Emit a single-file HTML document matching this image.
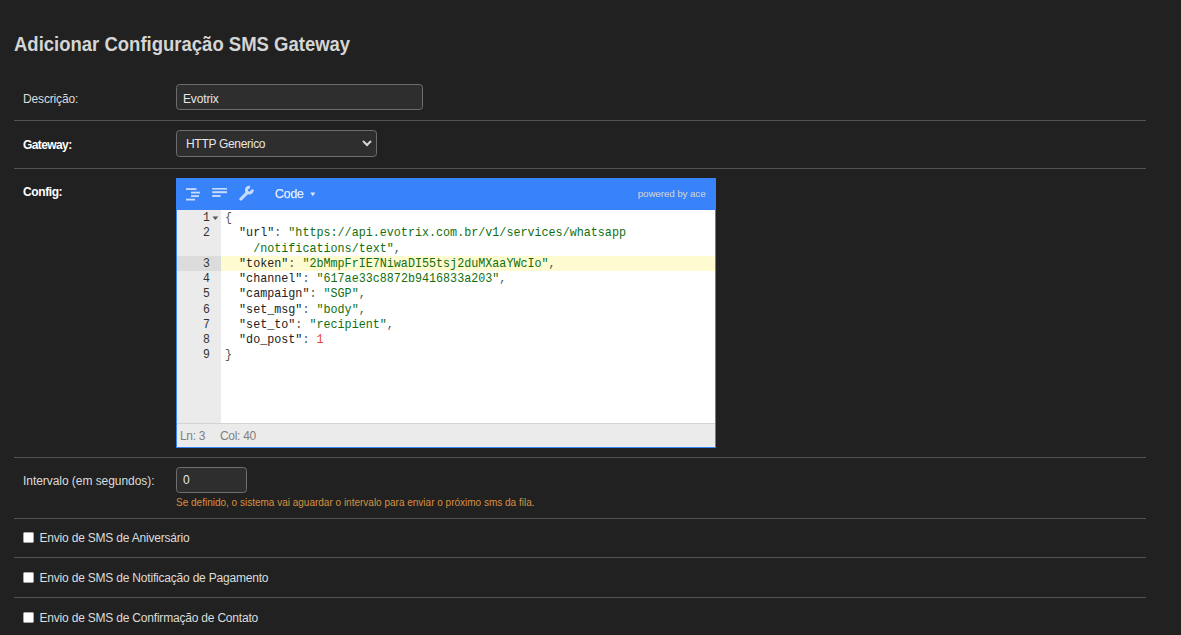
<!DOCTYPE html>
<html><head><meta charset="utf-8">
<style>
html,body{margin:0;padding:0;width:1181px;height:635px;overflow:hidden;background:#212121;}
body{position:relative;font-family:"Liberation Sans",sans-serif;color:#dcdcdc;}
.a{position:absolute;white-space:pre;}
.title{left:14px;top:31.5px;font-size:20px;font-weight:bold;color:#d5d5d5;line-height:24px;transform:scaleX(0.925);transform-origin:0 0;}
.lbl{left:23px;font-size:12px;line-height:14px;color:#dcdcdc;letter-spacing:-0.15px;}
.lbl.b{font-weight:bold;color:#fff;letter-spacing:-0.4px;}
.hr{position:absolute;left:14px;width:1132px;height:1px;background:#535353;}
.inp{position:absolute;box-sizing:border-box;border:1px solid #6e6e6e;border-radius:3.5px;background:#2e2e2e;}
.itxt{font-size:12px;line-height:14px;color:#e6e6e6;letter-spacing:-0.15px;}
/* editor */
.ed{position:absolute;left:176px;top:178px;width:540px;height:270px;box-sizing:border-box;border:1px solid #3883fa;background:#fff;overflow:hidden;}
.menu{position:absolute;left:0;top:0;width:538px;height:31px;background:#3883fa;}
.gut{position:absolute;left:0;top:31px;width:44px;height:213px;background:#ebebeb;}
.stat{position:absolute;left:0;top:244px;width:538px;height:24px;background:#ebebeb;border-top:1px solid #d3d3d3;box-sizing:border-box;}
.code{font-family:"Liberation Mono",monospace;font-size:13px;line-height:15.25px;color:#222;transform:scaleX(0.9017);transform-origin:0 0;}
.s{color:#107010;}
.n{color:#ee422e;}
.p{color:#555;}
.ln{font-family:"Liberation Mono",monospace;font-size:13.5px;line-height:15.25px;color:#333;text-align:right;width:40px;transform:scaleX(0.85);transform-origin:100% 0;}
.help{left:176px;font-size:10px;line-height:12px;color:#d8903f;}
.cb{position:absolute;left:23px;width:11px;height:11px;box-sizing:border-box;background:#fff;border:1px solid #a8a8a8;border-radius:1.5px;}
.gutact{position:absolute;left:0;top:76.75px;width:44px;height:15.25px;background:#dcdcdc;}
.actline{position:absolute;left:44px;top:76.75px;width:494px;height:15.25px;background:#fffbd1;}
.menutxt{font-size:12.5px;line-height:15px;color:#e3ecfd;letter-spacing:-0.3px;-webkit-text-stroke:0.25px #e3ecfd;will-change:transform;}
.pow{font-size:9.6px;line-height:12px;color:#c4cad6;will-change:transform;-webkit-text-stroke:0.2px #c4cad6;}
.stxt{font-size:12px;line-height:14px;color:#808080;letter-spacing:-0.3px;}
.cbl{letter-spacing:-0.2px;}
</style></head><body>
<div class="a title">Adicionar Configuração SMS Gateway</div>

<div class="a lbl" style="top:92px">Descrição:</div>
<div class="inp" style="left:176px;top:84px;width:247px;height:26px;"></div>
<div class="a itxt" style="left:183px;top:92px">Evotrix</div>
<div class="hr" style="top:120px"></div>

<div class="a lbl b" style="top:138px;letter-spacing:-0.6px">Gateway:</div>
<div class="inp" style="left:176px;top:130px;width:201px;height:27px;"></div>
<div class="a itxt" style="left:186px;top:137px;letter-spacing:-0.3px">HTTP Generico</div>
<svg class="a" style="left:361px;top:139px" width="12" height="8" viewBox="0 0 12 8"><path d="M2 2 L6 6 L10 2" fill="none" stroke="#d6d6d6" stroke-width="2"/></svg>
<div class="hr" style="top:168px"></div>

<div class="a lbl b" style="top:185px">Config:</div>
<div class="ed">
  <div class="menu">
    <svg class="a" style="left:9px;top:9px" width="16" height="14" viewBox="0 0 16 14">
      <g fill="#c9dcfc">
        <rect x="0" y="0.2" width="10.5" height="1.8"/>
        <rect x="5" y="3.7" width="9" height="1.8"/>
        <rect x="5" y="7.2" width="8" height="1.8"/>
        <rect x="0" y="10.7" width="9" height="1.8"/>
      </g>
    </svg>
    <svg class="a" style="left:35px;top:9px" width="16" height="12" viewBox="0 0 16 12">
      <g fill="#c9dcfc">
        <rect x="0.2" y="-0.4" width="14.8" height="2"/>
        <rect x="0.2" y="3.2" width="14.8" height="2"/>
        <rect x="0.2" y="7" width="8.5" height="1.9"/>
      </g>
    </svg>
    <svg class="a" style="left:59px;top:5px" width="22" height="20" viewBox="0 0 22 20">
      <path fill="#c9dcfc" d="M2.9 14.9 L10.2 7.6 L12.4 9.8 L5.1 17.1 Z"/>
      <path fill="none" stroke="#c9dcfc" stroke-width="3" d="M16.14 5.50 A2.9 2.9 0 1 1 13.90 3.26"/>
    </svg>
    <div class="a menutxt" style="left:98px;top:8px">Code</div>
    <svg class="a" style="left:133px;top:13px" width="6" height="5" viewBox="0 0 6 5"><path d="M0.3 0.6 L5.3 0.6 L2.8 4.2 Z" fill="#dce8fd"/></svg>
    <div class="a pow" style="left:461px;top:9px">powered by ace</div>
  </div>
  <div class="gut"></div>
  <div class="gutact"></div>
  <div class="actline"></div>
  <div class="stat"><span class="a stxt" style="left:3px;top:5px">Ln: 3</span><span class="a stxt" style="left:43px;top:5px">Col: 40</span></div>
</div>
<div class="a ln" style="left:169.5px;top:210px">1</div>
<svg class="a" style="left:212px;top:216px" width="7" height="5" viewBox="0 0 7 5"><path d="M0.5 0.5 L6.2 0.5 L3.35 4 Z" fill="#555"/></svg>
<div class="a ln" style="left:169.5px;top:225.25px">2</div>
<div class="a ln" style="left:169.5px;top:255.75px">3</div>
<div class="a ln" style="left:169.5px;top:271px">4</div>
<div class="a ln" style="left:169.5px;top:286.25px">5</div>
<div class="a ln" style="left:169.5px;top:301.5px">6</div>
<div class="a ln" style="left:169.5px;top:316.75px">7</div>
<div class="a ln" style="left:169.5px;top:332px">8</div>
<div class="a ln" style="left:169.5px;top:347.25px">9</div>
<div class="a code" style="left:225px;top:210px"><span class="p">{</span></div>
<div class="a code" style="left:225px;top:225.25px">  "url"<span class="p">: </span><span class="s">"https://api.evotrix.com.br/v1/services/whatsapp</span></div>
<div class="a code" style="left:225px;top:240.5px">    <span class="s">/notifications/text"</span><span class="p">,</span></div>
<div class="a code" style="left:225px;top:255.75px">  "token"<span class="p">: </span><span class="s">"2bMmpFrIE7NiwaDI55tsj2duMXaaYWcIo"</span><span class="p">,</span></div>
<div class="a code" style="left:225px;top:271px">  "channel"<span class="p">: </span><span class="s">"617ae33c8872b9416833a203"</span><span class="p">,</span></div>
<div class="a code" style="left:225px;top:286.25px">  "campaign"<span class="p">: </span><span class="s">"SGP"</span><span class="p">,</span></div>
<div class="a code" style="left:225px;top:301.5px">  "set_msg"<span class="p">: </span><span class="s">"body"</span><span class="p">,</span></div>
<div class="a code" style="left:225px;top:316.75px">  "set_to"<span class="p">: </span><span class="s">"recipient"</span><span class="p">,</span></div>
<div class="a code" style="left:225px;top:332px">  "do_post"<span class="p">: </span><span class="n">1</span></div>
<div class="a code" style="left:225px;top:347.25px"><span class="p">}</span></div>
<div class="hr" style="top:457px"></div>

<div class="a lbl" style="top:474px;letter-spacing:-0.05px">Intervalo (em segundos):</div>
<div class="inp" style="left:176px;top:467px;width:71px;height:26px;"></div>
<div class="a itxt" style="left:183px;top:473px">0</div>
<div class="a help" style="top:497px">Se definido, o sistema vai aguardar o intervalo para enviar o próximo sms da fila.</div>
<div class="hr" style="top:518px"></div>

<div class="cb" style="top:532px"></div>
<div class="a lbl cbl" style="left:39.5px;top:531px">Envio de SMS de Aniversário</div>
<div class="hr" style="top:557px"></div>
<div class="cb" style="top:571.5px"></div>
<div class="a lbl cbl" style="left:39.5px;top:571px">Envio de SMS de Notificação de Pagamento</div>
<div class="hr" style="top:597px"></div>
<div class="cb" style="top:611.5px"></div>
<div class="a lbl cbl" style="left:39.5px;top:611px">Envio de SMS de Confirmação de Contato</div>
</body></html>
